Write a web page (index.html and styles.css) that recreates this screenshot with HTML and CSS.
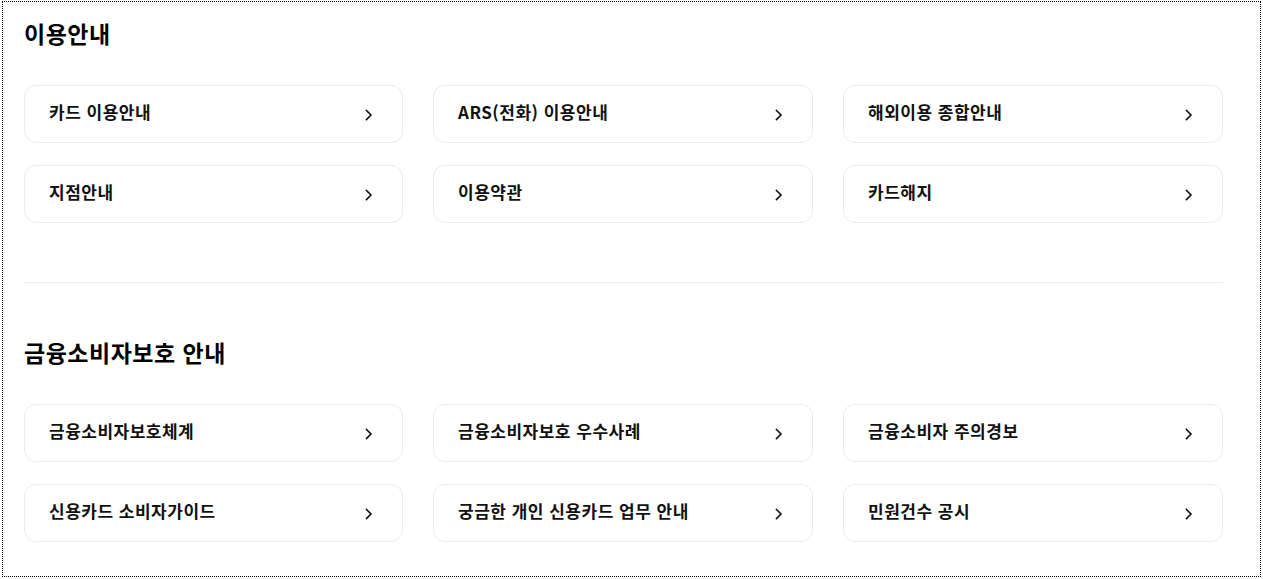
FILE: index.html
```html
<!DOCTYPE html>
<html lang="ko">
<head>
<meta charset="utf-8">
<title>이용안내</title>
<link rel="stylesheet" href="styles.css">
</head>
<body>
<div class="page">
  <section class="section section--first">
    <h2 class="section-title">이용안내</h2>
    <ul class="link-grid">
      <li><a class="link-card" href="#"><span class="link-label">카드 이용안내</span><svg class="chev" viewBox="0 0 8 12" width="8" height="12"><path d="M1.5 1.5 L6 6 L1.5 10.5" /></svg></a></li>
      <li><a class="link-card" href="#"><span class="link-label">ARS(전화) 이용안내</span><svg class="chev" viewBox="0 0 8 12" width="8" height="12"><path d="M1.5 1.5 L6 6 L1.5 10.5" /></svg></a></li>
      <li><a class="link-card" href="#"><span class="link-label">해외이용 종합안내</span><svg class="chev" viewBox="0 0 8 12" width="8" height="12"><path d="M1.5 1.5 L6 6 L1.5 10.5" /></svg></a></li>
      <li><a class="link-card" href="#"><span class="link-label">지점안내</span><svg class="chev" viewBox="0 0 8 12" width="8" height="12"><path d="M1.5 1.5 L6 6 L1.5 10.5" /></svg></a></li>
      <li><a class="link-card" href="#"><span class="link-label">이용약관</span><svg class="chev" viewBox="0 0 8 12" width="8" height="12"><path d="M1.5 1.5 L6 6 L1.5 10.5" /></svg></a></li>
      <li><a class="link-card" href="#"><span class="link-label">카드해지</span><svg class="chev" viewBox="0 0 8 12" width="8" height="12"><path d="M1.5 1.5 L6 6 L1.5 10.5" /></svg></a></li>
    </ul>
  </section>
  <section class="section section--second">
    <h2 class="section-title">금융소비자보호 안내</h2>
    <ul class="link-grid">
      <li><a class="link-card" href="#"><span class="link-label">금융소비자보호체계</span><svg class="chev" viewBox="0 0 8 12" width="8" height="12"><path d="M1.5 1.5 L6 6 L1.5 10.5" /></svg></a></li>
      <li><a class="link-card" href="#"><span class="link-label">금융소비자보호 우수사례</span><svg class="chev" viewBox="0 0 8 12" width="8" height="12"><path d="M1.5 1.5 L6 6 L1.5 10.5" /></svg></a></li>
      <li><a class="link-card" href="#"><span class="link-label">금융소비자 주의경보</span><svg class="chev" viewBox="0 0 8 12" width="8" height="12"><path d="M1.5 1.5 L6 6 L1.5 10.5" /></svg></a></li>
      <li><a class="link-card" href="#"><span class="link-label">신용카드 소비자가이드</span><svg class="chev" viewBox="0 0 8 12" width="8" height="12"><path d="M1.5 1.5 L6 6 L1.5 10.5" /></svg></a></li>
      <li><a class="link-card" href="#"><span class="link-label">궁금한 개인 신용카드 업무 안내</span><svg class="chev" viewBox="0 0 8 12" width="8" height="12"><path d="M1.5 1.5 L6 6 L1.5 10.5" /></svg></a></li>
      <li><a class="link-card" href="#"><span class="link-label">민원건수 공시</span><svg class="chev" viewBox="0 0 8 12" width="8" height="12"><path d="M1.5 1.5 L6 6 L1.5 10.5" /></svg></a></li>
    </ul>
  </section>
</div>
</body>
</html>
```
FILE: styles.css
```css
* { box-sizing: border-box; }
html, body { margin: 0; padding: 0; background: #fff; }
body {
  font-family: "Noto Sans CJK KR", "Noto Sans", sans-serif;
  color: #111;
}
.page {
  margin: 1px 2px 2px 2px;
  height: 576px;
  border: 1px dotted #000;
  padding: 0 37px 0 21px;
}
.section--first {
  padding-top: 16px;
  padding-bottom: 59px;
  border-bottom: 1px solid #ebebeb;
}
.section--second {
  padding-top: 54px;
}
.section-title {
  margin: 0 0 37px;
  font-size: 23px;
  line-height: 30px;
  font-weight: 700;
  color: #000;
  letter-spacing: 0.5px;
}
.link-grid {
  list-style: none;
  margin: 0;
  padding: 0;
  display: grid;
  grid-template-columns: 379fr 380fr 380fr;
  column-gap: 30px;
  row-gap: 22px;
}
.link-card {
  display: flex;
  align-items: center;
  justify-content: space-between;
  height: 58px;
  padding: 0 29px 0 24px;
  border: 1px solid #ebebeb;
  border-radius: 12px;
  text-decoration: none;
  color: #111;
}
.link-label {
  font-size: 17px;
  line-height: 24px;
  font-weight: 600;
  letter-spacing: 0.5px;
  margin-top: -4px;
}
.chev {
  display: block;
  margin-top: 1px;
  fill: none;
  stroke: #111;
  stroke-width: 1.6;
  stroke-linecap: square;
  stroke-linejoin: miter;
}
```
